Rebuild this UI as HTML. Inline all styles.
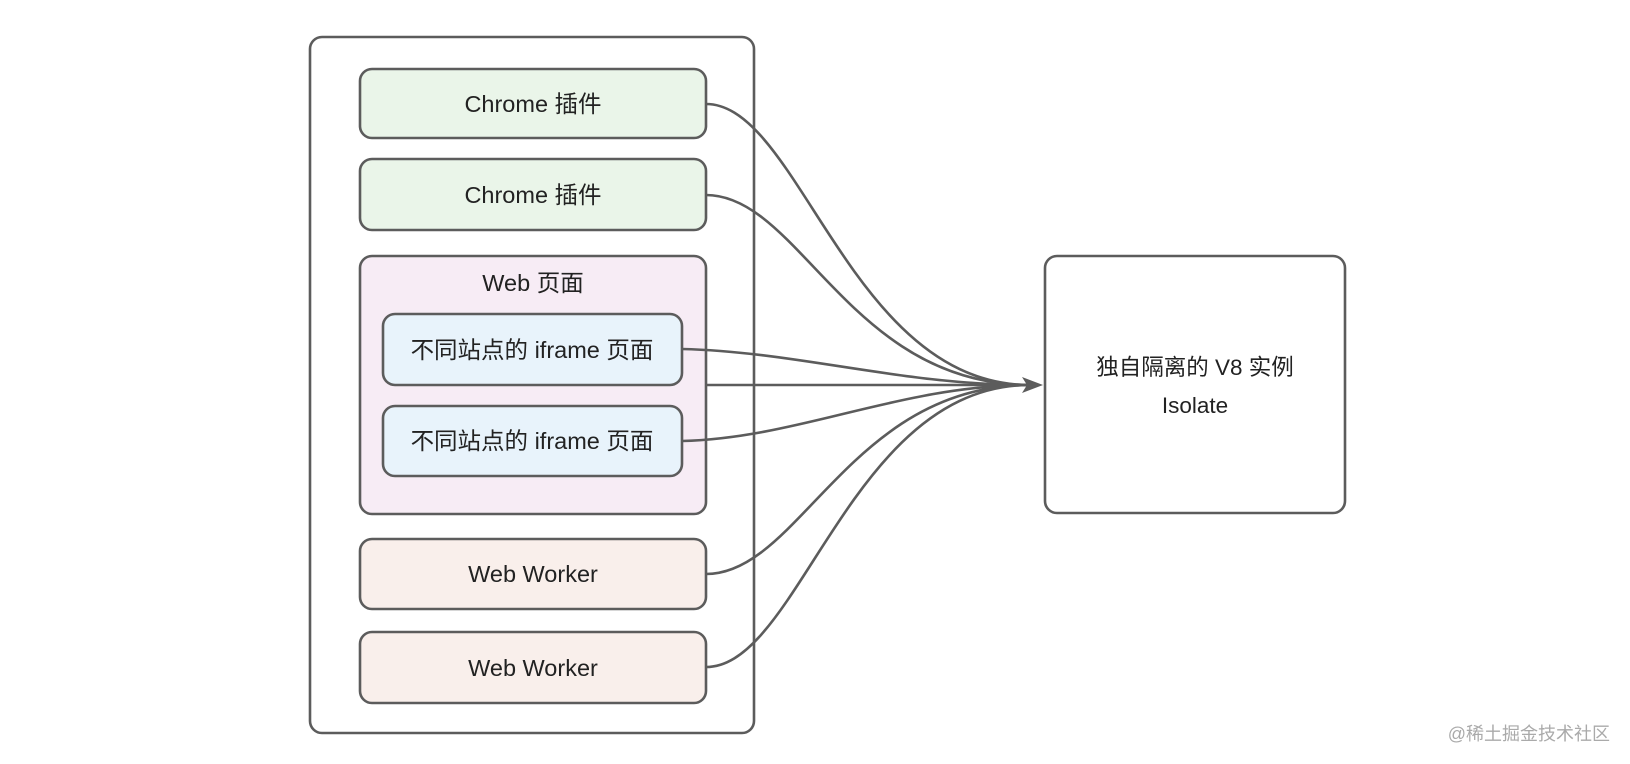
<!DOCTYPE html>
<html><head><meta charset="utf-8"><style>
html,body{margin:0;padding:0;background:#fff;width:1630px;height:764px;overflow:hidden}
svg text{font-family:"Liberation Sans","Noto Sans CJK SC",sans-serif;fill:#222}
</style></head><body>
<svg width="1630" height="764" viewBox="0 0 1630 764" xmlns="http://www.w3.org/2000/svg">
<g stroke="#5c5c5c" stroke-width="2.6">
<rect x="310" y="37" width="444" height="696" rx="12" fill="#fff"/>
<rect x="360" y="69" width="346" height="69" rx="12" fill="#eaf5e9"/>
<rect x="360" y="159" width="346" height="71" rx="12" fill="#eaf5e9"/>
<rect x="360" y="256" width="346" height="258" rx="12" fill="#f7ecf5"/>
<rect x="383" y="314" width="299" height="71" rx="12" fill="#e8f3fb"/>
<rect x="383" y="406" width="299" height="70" rx="12" fill="#e8f3fb"/>
<rect x="360" y="539" width="346" height="70" rx="12" fill="#f9efeb"/>
<rect x="360" y="632" width="346" height="71" rx="12" fill="#f9efeb"/>
<rect x="1045" y="256" width="300" height="257" rx="12" fill="#fff"/>
</g>
<g stroke="#5c5c5c" stroke-width="2.6" fill="none">
<path d="M706 104 C800 104,850 385,1030 385"/>
<path d="M706 195 C800 195,850 385,1030 385"/>
<path d="M682 349 C800 352,900 385,1030 385"/>
<path d="M706 385 L1030 385"/>
<path d="M682 441 C800 438,900 385,1030 385"/>
<path d="M706 574 C800 574,850 385,1030 385"/>
<path d="M706 667 C800 667,850 385,1030 385"/>
</g>
<path d="M1043 385 L1022 377 L1027 385 L1022 393 Z" fill="#5c5c5c"/>
<g font-size="23.5" text-anchor="middle">
<text x="533" y="112">Chrome 插件</text>
<text x="533" y="203">Chrome 插件</text>
<text x="533" y="291">Web 页面</text>
<text x="532" y="358">不同站点的 iframe 页面</text>
<text x="532" y="449">不同站点的 iframe 页面</text>
<text x="533" y="582">Web Worker</text>
<text x="533" y="676">Web Worker</text>
</g>
<g font-size="22.5" text-anchor="middle">
<text x="1195" y="375">独自隔离的 V8 实例</text>
<text x="1195" y="413">Isolate</text>
</g>
<text x="1610" y="740" font-size="18" text-anchor="end" style="fill:#aaa">@稀土掘金技术社区</text>
</svg>
</body></html>
